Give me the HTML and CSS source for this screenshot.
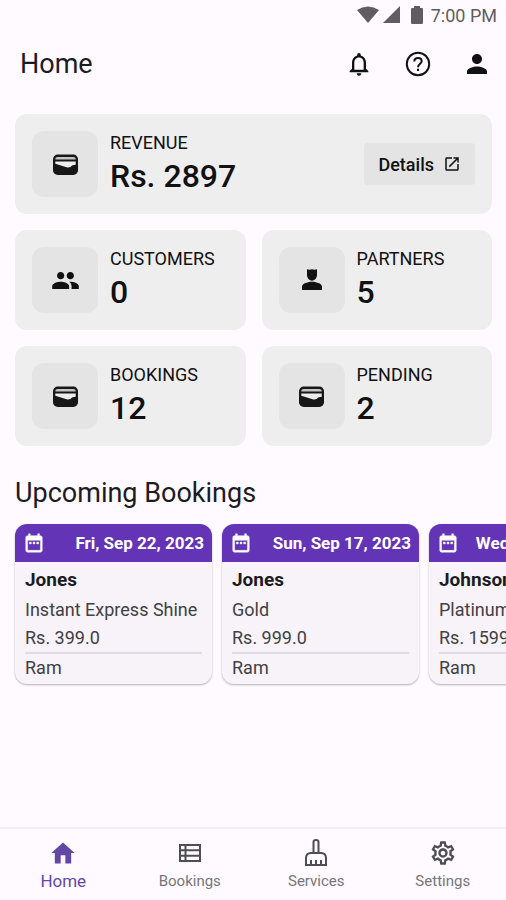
FILE: index.html
```
<!DOCTYPE html>
<html lang="en">
<head>
<meta charset="utf-8">
<meta name="viewport" content="width=device-width, initial-scale=1">
<title>Home</title>
<link rel="stylesheet" href="styles.css">
</head>
<body>
<svg class="sprite" aria-hidden="true">
  <symbol id="wallet" viewBox="0 0 24 24">
    <rect x="0" y="2.5" width="24" height="19.5" rx="4.5" fill="#171717"/>
    <path d="M2.2 7.2V6.8Q2.2 4.8 4.5 4.8H19.5Q21.8 4.8 21.8 6.8V7.2Z" fill="#c4c4c4"/>
    <path d="M2.2 9.2H21.8V12.2L18.8 12.8Q16 15.8 13 14.6L2.2 11.3Z" fill="#ededed"/>
  </symbol>
  <symbol id="calendar" viewBox="0 0 24 24">
    <path d="M7 11h2v2H7zm4 0h2v2h-2zm4 0h2v2h-2zM19 4h-1V2h-2v2H8V2H6v2H5c-1.11 0-2 .9-2 2v14c0 1.1.89 2 2 2h14c1.1 0 2-.9 2-2V6c0-1.1-.9-2-2-2zm0 16H5V9h14z" fill="currentColor" stroke="currentColor" stroke-width=".5"/>
  </symbol>
</svg>
<div class="app">
  <div class="status">
    <svg width="22" height="18" viewBox="0 0 22 18"><path d="M0 4Q11-3 22 4L11 17Z" fill="currentColor"/></svg>
    <svg width="18" height="18" viewBox="0 0 18 18"><path d="M17 0V17H0Z" fill="currentColor"/></svg>
    <svg class="battery" width="12" height="18" viewBox="0 0 12 18"><path d="M3 0H9V2H11Q12 2 12 3V17Q12 18 11 18H1Q0 18 0 17V3Q0 2 1 2H3Z" fill="currentColor"/></svg>
    <time>7:00 PM</time>
  </div>

  <header class="topbar">
    <h1>Home</h1>
    <div class="actions">
      <button type="button" aria-label="Notifications"><svg width="28" height="28" viewBox="0 0 24 24"><path d="M12 22c1.1 0 2-.9 2-2h-4c0 1.1.9 2 2 2zm6-6v-5c0-3.07-1.63-5.64-4.5-6.32V4c0-.83-.67-1.5-1.5-1.5s-1.500.67-1.500 1.500v.68C7.640 5.360 6 7.920 6 11v5l-2 2v1h16v-1l-2-2zm-2 1H8v-6c0-2.480 1.510-4.500 4-4.500s4 2.020 4 4.500v6z"/></svg></button>
      <button type="button" aria-label="Help"><svg class="line" width="28" height="28" viewBox="0 0 28 28"><circle cx="14" cy="14" r="11.2"/><path d="M10.300 11.500Q10.300 7.900 14 7.900T17.700 11.200C17.700 13.600 14 14 14 17.200M14 18.800V21"/></svg></button>
      <button type="button" aria-label="Profile"><svg width="30" height="30" viewBox="0 0 24 24"><path d="M12 12c2.210 0 4-1.790 4-4s-1.790-4-4-4-4 1.790-4 4 1.790 4 4 4zm0 2c-2.670 0-8 1.340-8 4v2h16v-2c0-2.660-5.330-4-8-4z"/></svg></button>
    </div>
  </header>

  <main>
    <section class="stats" aria-label="Statistics">
      <article class="stat wide">
        <div class="tile"><svg width="25" height="25"><use href="#wallet"/></svg></div>
        <div class="figure"><h2>REVENUE</h2><p>Rs. 2897</p></div>
        <button class="details" type="button">Details
          <svg width="18" height="18" viewBox="0 0 24 24"><path d="M19 19H5V5h7V3H5c-1.110 0-2 .9-2 2v14c0 1.100.89 2 2 2h14c1.100 0 2-.9 2-2v-7h-2v7zM14 3v2h3.590l-9.830 9.830 1.410 1.410L19 6.410V10h2V3h-7z"/></svg>
        </button>
      </article>
      <article class="stat">
        <div class="tile"><svg width="29" height="29" viewBox="0 0 24 24"><path d="M16 11c1.660 0 2.990-1.340 2.990-3S17.660 5 16 5s-3 1.340-3 3 1.340 3 3 3zm-8 0c1.660 0 2.990-1.340 2.990-3S9.660 5 8 5 5 6.340 5 8s1.340 3 3 3zm0 2c-2.330 0-7 1.170-7 3.500V19h14v-2.500C15 14.170 10.330 13 8 13zm8 0c-.29 0-.62.02-.97.05 1.160.84 1.970 1.970 1.970 3.450V19h6v-2.500c0-2.330-4.670-3.500-7-3.500z"/></svg></div>
        <div class="figure"><h2>CUSTOMERS</h2><p>0</p></div>
      </article>
      <article class="stat">
        <div class="tile"><svg width="30" height="30" viewBox="0 0 24 24"><path d="M8 3.300L10 3.800 12 3.300 14 3.800 16 3.300V8C16 10.500 14 12.500 12 12.500S8 10.500 8 8ZM12 13.300C9.330 13.300 4 14.500 4 17.200V20H20V17.200C20 14.500 14.670 13.300 12 13.300Z"/></svg></div>
        <div class="figure"><h2>PARTNERS</h2><p>5</p></div>
      </article>
      <article class="stat">
        <div class="tile"><svg width="25" height="25"><use href="#wallet"/></svg></div>
        <div class="figure"><h2>BOOKINGS</h2><p>12</p></div>
      </article>
      <article class="stat">
        <div class="tile"><svg width="25" height="25"><use href="#wallet"/></svg></div>
        <div class="figure"><h2>PENDING</h2><p>2</p></div>
      </article>
    </section>

    <section class="upcoming">
      <h2>Upcoming Bookings</h2>
      <div class="bookings">
        <article class="booking">
          <header><svg width="22" height="22"><use href="#calendar"/></svg><time>Fri, Sep 22, 2023</time></header>
          <div class="info"><h3>Jones</h3><p>Instant Express Shine</p><p>Rs. 399.0</p><p class="agent">Ram</p></div>
        </article>
        <article class="booking">
          <header><svg width="22" height="22"><use href="#calendar"/></svg><time>Sun, Sep 17, 2023</time></header>
          <div class="info"><h3>Jones</h3><p>Gold</p><p>Rs. 999.0</p><p class="agent">Ram</p></div>
        </article>
        <article class="booking">
          <header><svg width="22" height="22"><use href="#calendar"/></svg><time>Wed, Sep 20, 2023</time></header>
          <div class="info"><h3>Johnson</h3><p>Platinum</p><p>Rs. 1599.0</p><p class="agent">Ram</p></div>
        </article>
      </div>
    </section>
  </main>

  <nav class="tabs" aria-label="Main">
    <a class="active" href="#" aria-current="page"><svg width="28" height="28" viewBox="0 0 24 24"><path d="M10 21v-7h4v7h5v-9h3L12 3 2 12h3v9z"/></svg>Home</a>
    <a href="#"><svg class="line" width="28" height="28" viewBox="0 0 28 28"><path d="M4 6H24V22H4ZM4 11.300H24M4 16.700H24M9.500 6V22"/></svg>Bookings</a>
    <a href="#"><svg class="line" width="28" height="28" viewBox="0 0 28 28"><path d="M11.500 14V3Q11.500 1 14 1T16.500 3V14M4 26V19Q4 14 9 14H19Q24 14 24 19V26ZM9 26V21M14 26V21M19 26V21"/></svg>Services</a>
    <a href="#"><svg width="28" height="28" viewBox="0 0 24 24"><path d="M19.430 12.980c.04-.32.07-.64.07-.98 0-.34-.03-.66-.07-.98l2.110-1.650c.19-.15.24-.42.12-.64l-2-3.460c-.09-.16-.26-.25-.44-.25-.06 0-.12.01-.17.03l-2.490 1c-.52-.4-1.080-.73-1.690-.98l-.38-2.650C14.460 2.180 14.250 2 14 2h-4c-.25 0-.46.18-.49.42l-.38 2.650c-.61.25-1.170.59-1.690.98l-2.490-1c-.06-.02-.12-.03-.18-.03-.17 0-.34.09-.43.25l-2 3.460c-.13.22-.07.49.12.64l2.110 1.650c-.04.32-.07.65-.07.98 0 .33.03.66.07.98l-2.110 1.650c-.19.15-.24.42-.12.64l2 3.460c.09.16.26.25.44.25.06 0 .12-.01.17-.03l2.490-1c.52.4 1.080.73 1.690.98l.38 2.650c.03.24.24.42.49.42h4c.25 0 .46-.18.49-.42l.38-2.650c.61-.25 1.170-.59 1.690-.98l2.490 1c.06.02.12.03.18.03.17 0 .34-.09.43-.25l2-3.460c.12-.22.07-.49-.12-.64l-2.110-1.650zm-1.980-1.710c.04.31.05.52.05.73 0 .21-.02.43-.05.73l-.14 1.130.89.7 1.080.84-.7 1.210-1.270-.51-1.040-.42-.9.68c-.43.32-.84.56-1.250.73l-1.060.43-.16 1.130-.2 1.350h-1.400l-.19-1.350-.16-1.130-1.060-.43c-.43-.18-.83-.41-1.230-.71l-.91-.7-1.060.43-1.270.51-.7-1.210 1.080-.84.89-.7-.14-1.130c-.03-.31-.05-.54-.05-.74s.02-.43.05-.73l.14-1.130-.89-.7-1.080-.84.7-1.210 1.270.51 1.040.42.9-.68c.43-.32.84-.56 1.250-.73l1.060-.43.16-1.130.2-1.350h1.390l.19 1.350.16 1.130 1.060.43c.43.18.83.41 1.230.71l.91.7 1.060-.43 1.270-.51.7 1.210-1.070.85-.89.7.14 1.130zM12 8c-2.210 0-4 1.790-4 4s1.790 4 4 4 4-1.790 4-4-1.790-4-4-4zm0 6c-1.100 0-2-.9-2-2s.9-2 2-2 2 .9 2 2-.9 2-2 2z"/></svg>Settings</a>
  </nav>
</div>
</body>
</html>
```
FILE: styles.css
```
* { box-sizing: border-box; }
body, h1, h2, h3, p { margin: 0; }
body {
  background: #fefaff;
  color: #1c1b1f;
  font-family: Roboto, "Liberation Sans", sans-serif;
}
button {
  border: 0;
  background: none;
  color: inherit;
  font-family: inherit;
}
svg { display: block; flex: none; fill: currentColor; }
.line { fill: none; stroke: currentColor; stroke-width: 2; }
.sprite { position: absolute; width: 0; height: 0; }
.app {
  display: flex;
  flex-direction: column;
  min-height: 100vh;
}
.status {
  display: flex;
  align-items: center;
  justify-content: flex-end;
  gap: 4px;
  height: 30px;
  padding-right: 9px;
  color: #5f5d61;
  font-size: 18px;
}
.battery { margin: 0 4px 0 6px; }
.topbar {
  display: flex;
  align-items: center;
  justify-content: space-between;
  height: 68px;
  padding: 0 14px 0 20px;
}
.topbar h1 { font-size: 27px; font-weight: 400; }
.actions { display: flex; gap: 29px; }
.actions button {
  display: flex;
  align-items: center;
  justify-content: center;
  width: 30px;
  height: 30px;
  padding: 0;
  color: #111;
}
main { flex: 1; padding-top: 16px; }
.stats {
  display: grid;
  grid-template-columns: 1fr 1fr;
  gap: 16px;
  padding: 0 14px 0 15px;
}
.stat {
  display: flex;
  align-items: center;
  gap: 12px;
  padding: 17px;
  border-radius: 12px;
  background: #efeeee;
  color: #111;
}
.wide { grid-column: 1 / -1; }
.tile {
  display: flex;
  align-items: center;
  justify-content: center;
  width: 66px;
  height: 66px;
  border-radius: 12px;
  background: #e5e4e5;
}
.figure { flex: 1; }
.figure h2 { font-size: 18px; font-weight: 400; line-height: 24px; }
.figure p { font-size: 32px; font-weight: 500; line-height: 42px; }
.details {
  display: flex;
  align-items: center;
  gap: 9px;
  height: 42px;
  padding: 0 14px;
  border-radius: 4px;
  background: #e5e4e5;
  font-size: 18px;
  font-weight: 500;
}
.upcoming { padding-top: 30px; }
.upcoming h2 {
  padding-left: 15px;
  font-size: 27px;
  font-weight: 400;
  line-height: 34px;
}
.bookings {
  display: flex;
  gap: 10px;
  padding: 14px 15px 8px;
  overflow-x: auto;
  scrollbar-width: none;
}
.booking {
  flex: 0 0 197px;
  overflow: hidden;
  border-radius: 12px;
  background: #f7f3f9;
  box-shadow: 0 1px 2px #0000004d;
}
.booking header {
  display: flex;
  align-items: center;
  justify-content: space-between;
  height: 38px;
  padding: 0 8px;
  background: #6334b5;
  color: #fff;
  font-size: 17px;
  font-weight: 700;
}
.info { padding: 4px 10px 2px; font-size: 18px; color: #414044; }
.info h3 { font-size: 19px; font-weight: 700; line-height: 28px; color: #1c1b1f; }
.info p { line-height: 28px; white-space: nowrap; }
.info h3 + p { padding-top: 2px; }
.info .agent { border-top: 2px solid #dfdbe2; }
.tabs {
  display: flex;
  height: 73px;
  border-top: 2px solid #f5f0f5;
}
.tabs a {
  display: flex;
  flex: 1;
  flex-direction: column;
  align-items: center;
  gap: 4px;
  padding-top: 10px;
  color: #77757a;
  font-size: 15px;
  line-height: 20px;
  text-decoration: none;
}
.tabs svg { color: #4f4d52; }
.tabs .active, .tabs .active svg { color: #6247a5; }
.tabs .active { font-size: 17px; }
```
